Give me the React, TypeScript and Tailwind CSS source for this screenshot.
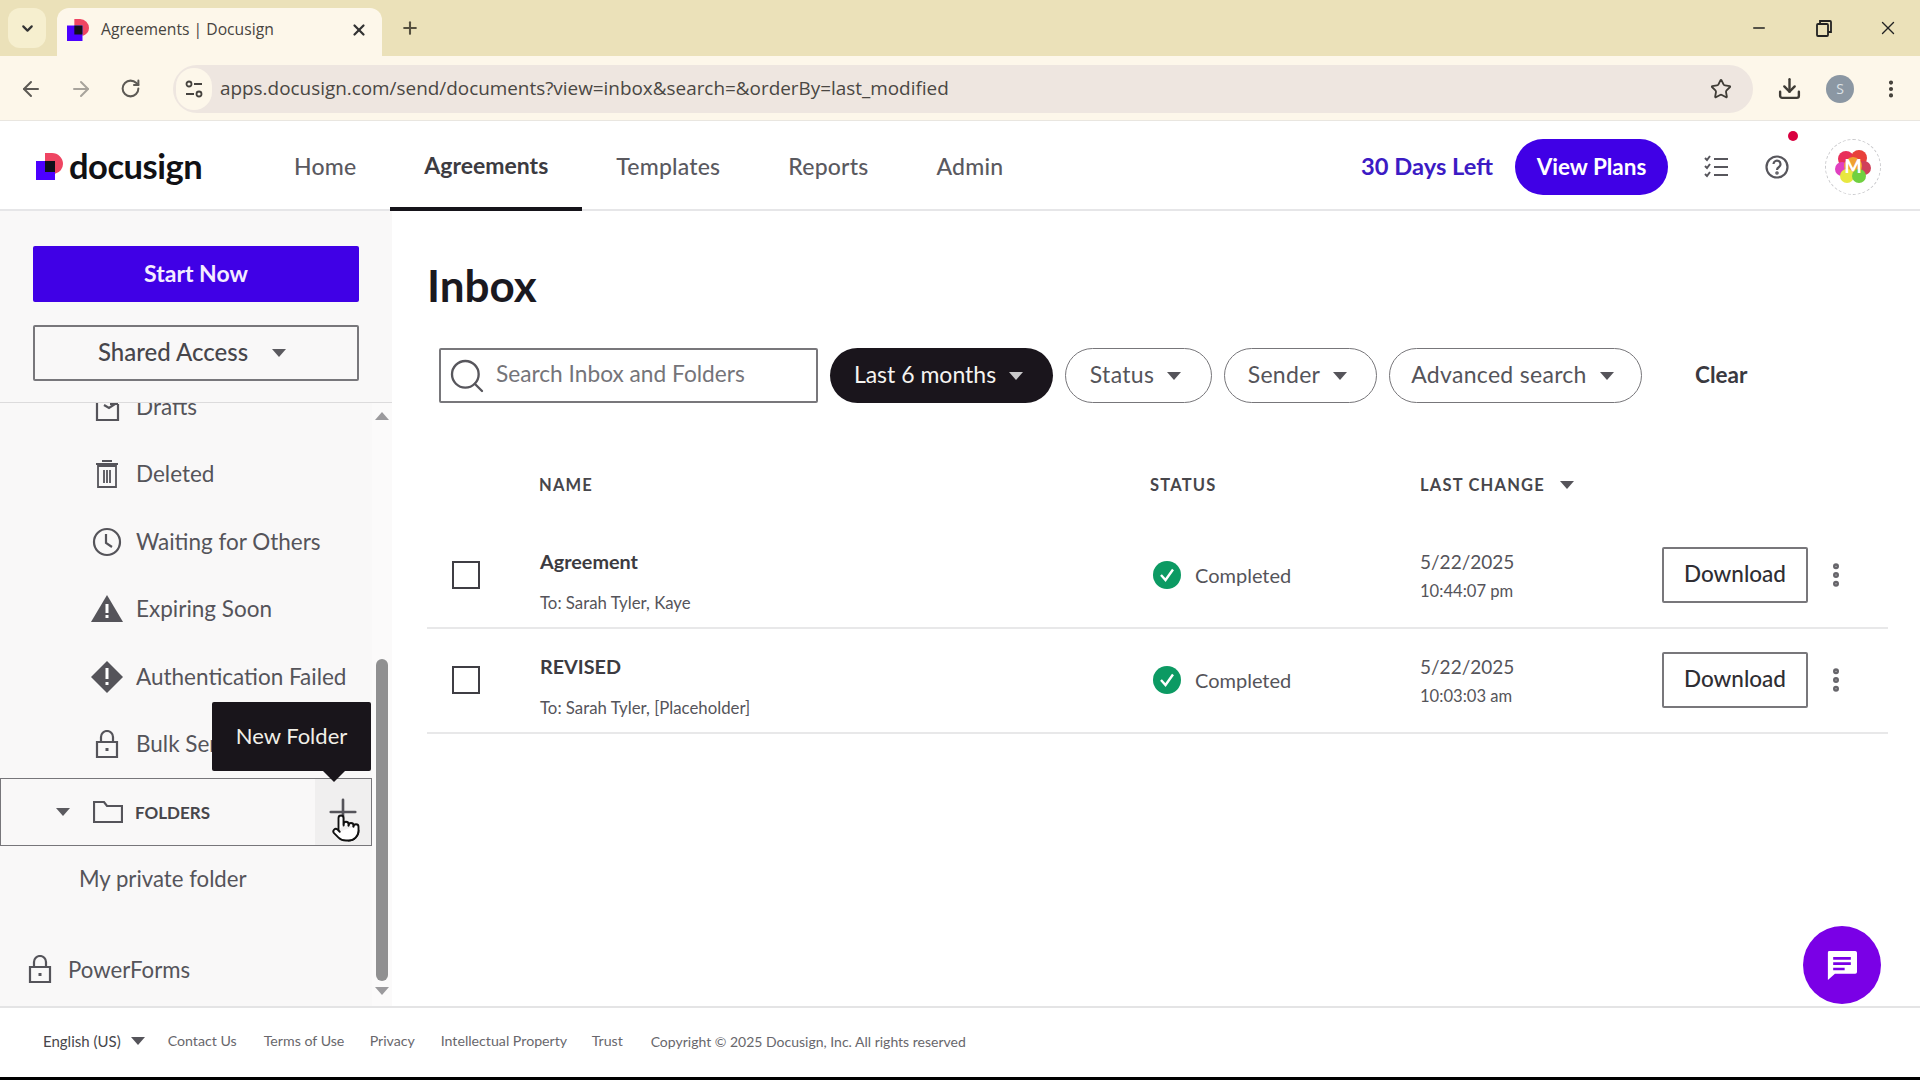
import { ArrowLeft, ArrowRight, ChevronDown, Download as DownloadIcon, EllipsisVertical, Minus, Plus, Pointer, RotateCw, Search, Star, X } from "lucide-react";

const font = "font-['Lato','Noto_Sans',sans-serif]";

function Caret({ className = "" }: { className?: string }) {
    return (
        <svg width="14" height="8" viewBox="0 0 14 8" className={className}>
            <path d="M0 0h14L7 8z" fill="currentColor" />
        </svg>
    );
}

function Logo({ size }: { size: number }) {
    return (
        <svg width={size} height={size} viewBox="0 0 27 27">
            <path d="M9 0h7a11 11 0 0 1 11 11v0a10 10 0 0 1-8 9.800V8H9z" fill="#ef4562" />
            <rect x="0" y="8" width="19" height="19" fill="#4c00ff" />
            <rect x="9" y="8" width="10" height="11" fill="#10101a" />
        </svg>
    );
}

function SideIcon({ name }: { name: string }) {
    const stroke = { fill: "none", stroke: "#55545a", strokeWidth: 2.2 };
    if (name === "drafts") {
        return (
            <svg width="26" height="30" viewBox="0 0 26 30">
                <path d="M3 5v23h21V12" {...stroke} />
                <path d="M10 13l5 3 6-4M16 12l8 0" {...stroke} />
            </svg>
        );
    }
    if (name === "trash") {
        return (
            <svg width="26" height="30" viewBox="0 0 26 30">
                <path d="M4 7h18v21H4zM2 5h22M8 2h10M10 11v13M13 11v13M16 11v13" {...stroke} strokeWidth={1.8} />
            </svg>
        );
    }
    if (name === "clock") {
        return (
            <svg width="30" height="30" viewBox="0 0 30 30">
                <circle cx="15" cy="15" r="13" {...stroke} />
                <path d="M14 7v9l6 4" {...stroke} />
            </svg>
        );
    }
    if (name === "warn") {
        return (
            <svg width="32" height="28" viewBox="0 0 32 28">
                <path d="M16 0l16 27H0z" fill="#55545a" />
                <path d="M14.500 9h3v9h-3zM14.500 20h3v3h-3z" fill="#fff" />
            </svg>
        );
    }
    if (name === "fail") {
        return (
            <svg width="32" height="32" viewBox="0 0 32 32">
                <path d="M16 0l16 16-16 16L0 16z" fill="#55545a" />
                <path d="M14.500 7h3v11h-3zM14.500 21h3v3h-3z" fill="#fff" />
            </svg>
        );
    }
    return (
        <svg width="24" height="28" viewBox="0 0 24 28">
            <path d="M2 12h20v15H2zM6 12V7a6 6 0 0 1 12 0v5" {...stroke} />
            <rect x="10.500" y="18" width="3" height="3" fill="#55545a" />
        </svg>
    );
}

const sideItems = [
    { label: "Drafts", icon: "drafts" },
    { label: "Deleted", icon: "trash" },
    { label: "Waiting for Others", icon: "clock" },
    { label: "Expiring Soon", icon: "warn" },
    { label: "Authentication Failed", icon: "fail" },
    { label: "Bulk Send", icon: "lock" },
];

const rows = [
    { name: "Agreement", to: "To: Sarah Tyler, Kaye", date: "5/22/2025", time: "10:44:07 pm" },
    { name: "REVISED", to: "To: Sarah Tyler, [Placeholder]", date: "5/22/2025", time: "10:03:03 am" },
];

const footerLinks = [
    { label: "Contact Us", w: "w-[96px]" },
    { label: "Terms of Use", w: "w-[106px]" },
    { label: "Privacy", w: "w-[71px]" },
    { label: "Intellectual Property", w: "w-[151px]" },
    { label: "Trust", w: "w-[59px]" },
];

function BrowserChrome() {
    return (
        <>
            <div className="flex h-[56px] items-end bg-[#ebe1b9]">
                <div className="mb-[8px] ml-[8px] flex h-[40px] w-[38px] items-center justify-center rounded-[12px] bg-[#f6efcf]">
                    <ChevronDown size={17} strokeWidth={3} className="text-[#333]" />
                </div>
                <div className="ml-[11px] flex h-[48px] w-[325px] items-center rounded-t-[12px] bg-[#fdf7ea] pb-[4px] pl-[10px] pr-[14px]">
                    <Logo size={22} />
                    <span className="ml-[12px] flex-1 font-['Open_Sans',sans-serif] text-[15.700px] text-[#47443f]">Agreements | Docusign</span>
                    <X size={18} strokeWidth={3} className="text-[#333]" />
                </div>
                <div className="mb-[17px] ml-[18px] flex flex-1 items-center">
                    <Plus size={20} strokeWidth={2.500} className="text-[#55503f]" />
                    <div className="ml-auto flex items-center gap-[47px] pr-[21px]">
                        <Minus size={18} strokeWidth={2} className="text-[#222]" />
                        <svg width="18" height="18" viewBox="0 0 18 18" fill="none" stroke="#222" strokeWidth="1.800">
                            <rect x="2" y="5" width="11" height="12" rx="1" />
                            <path d="M5 5V2h10a1 1 0 0 1 1 1v10h-3" />
                        </svg>
                        <X size={22} strokeWidth={1.500} className="-ml-[3px] text-[#222]" />
                    </div>
                </div>
            </div>
            <div className="flex h-[65px] items-center border-b border-[#e9e6e0] bg-[#fdf7ea] pt-[1px]">
                <div className="flex w-[173px] items-center pl-[19px] text-[#5d5a55]">
                    <ArrowLeft size={24} strokeWidth={2} />
                    <ArrowRight size={24} strokeWidth={2} className="ml-[26px] text-[#a8a49c]" />
                    <RotateCw size={21} strokeWidth={2.300} className="ml-[27px]" />
                </div>
                <div className="flex h-[48px] w-[1580px] items-center rounded-full bg-[#eee6e0]">
                    <div className="ml-[3px] flex h-[42px] w-[36px] items-center justify-center rounded-full bg-[#fdf7ea]">
                        <svg width="20" height="20" viewBox="0 0 20 20" fill="none" stroke="#46433f" strokeWidth="1.800">
                            <circle cx="5" cy="5" r="2.500" />
                            <path d="M10 5h8M2 15h8" />
                            <circle cx="15" cy="15" r="2.500" />
                        </svg>
                    </div>
                    <span className="ml-[8px] flex-1 font-['Open_Sans',sans-serif] text-[18.900px] text-[#4a4743]">apps.docusign.com/send/documents?view=inbox&amp;search=&amp;orderBy=last_modified</span>
                    <Star size={22} strokeWidth={2} className="mr-[21px] text-[#3f3c36]" />
                </div>
                <div className="flex flex-1 items-center pl-[24px]">
                    <DownloadIcon size={25} strokeWidth={2.300} className="text-[#3f3c36]" />
                    <div className="ml-[24px] flex h-[28px] w-[28px] items-center justify-center rounded-full bg-[#8b97a3] font-['Open_Sans',sans-serif] text-[14px] text-[#dde2e6]">S</div>
                    <EllipsisVertical size={22} strokeWidth={2.500} className="ml-[26px] text-[#3f3c36]" />
                </div>
            </div>
        </>
    );
}

function TopNav() {
    const links = ["Home", "Agreements", "Templates", "Reports", "Admin"];
    return (
        <header className="relative flex h-[90px] shrink-0 items-center border-b-2 border-[#e6e6e8] bg-white pt-[3px]">
            <div className="ml-[36px] flex w-[224px] items-center">
                <Logo size={27} />
                <span className="ml-[6px] font-['Lato',sans-serif] text-[34.500px] font-bold leading-none tracking-[-0.500px] text-[#111114]">docusign</span>
            </div>
            <nav className="flex h-full items-stretch">
                {links.map((link) => (
                    <a
                        key={link}
                        className={
                            link === "Agreements"
                                ? "-mb-[2px] flex items-center border-b-[4px] border-b-[#16141a] px-[34px] text-[23px] font-bold text-[#3c3b41]"
                                : "flex items-center px-[34px] text-[23px] font-medium tracking-[0.200px] text-[#5a595f]"
                        }
                    >
                        {link}
                    </a>
                ))}
            </nav>
            <div className="ml-auto flex items-center pr-[39px]">
                <span className="text-[23.700px] font-bold text-[#3c1bc4]">30 Days Left</span>
                <button className="ml-[22px] h-[56px] w-[153px] rounded-full bg-[#4000e6] text-[22.500px] font-bold text-white">View Plans</button>
                <svg width="26" height="26" viewBox="0 0 26 26" fill="none" stroke="#57565c" strokeWidth="2" className="ml-[35px]">
                    <path d="M2 4l2 2 3-4M2 12l2 2 3-4M2 20l2 2 3-4M11 5h14M11 13h14M11 21h14" />
                </svg>
                <svg width="24" height="24" viewBox="0 0 24 24" fill="none" stroke="#57565c" strokeWidth="2.200" className="ml-[36px]">
                    <circle cx="12" cy="12" r="10.500" />
                    <path d="M8.500 9a3.500 3.500 0 1 1 5.500 3c-1.300.9-2 1.500-2 3" />
                    <circle cx="12" cy="18" r="0.700" />
                </svg>
                <div className="ml-[36px] flex h-[56px] w-[56px] items-center justify-center rounded-full border border-dashed border-[#c9c9cc]">
                    <svg width="38" height="38" viewBox="0 0 38 38">
                        <circle cx="12" cy="11" r="8" fill="#e8305a" />
                        <circle cx="25" cy="10" r="8" fill="#e8403a" />
                        <circle cx="8" cy="21" r="7" fill="#e040c0" />
                        <circle cx="30" cy="20" r="7" fill="#d0405a" />
                        <circle cx="19" cy="18" r="9" fill="#f0a030" />
                        <circle cx="13" cy="28" r="7" fill="#e8e840" />
                        <circle cx="25" cy="28" r="7" fill="#70d040" />
                        <text x="19" y="25" textAnchor="middle" fontSize="18" fontWeight="900" fill="#fff" fontFamily="Lato">M</text>
                    </svg>
                </div>
            </div>
            <span className="absolute left-[1788px] top-[10px] h-[10px] w-[10px] rounded-full bg-[#d9003f]" />
        </header>
    );
}

function Sidebar() {
    return (
        <aside className="flex w-[392px] shrink-0 flex-col bg-[#f9f8f8]">
            <div className="flex h-[192px] shrink-0 flex-col gap-[23px] border-b border-[#dcdbdc] pl-[33px] pr-[33px] pt-[35px]">
                <button className="h-[56px] rounded-[2px] bg-[#4000e6] pb-[2px] text-[23px] font-bold text-[#f4ecff]">Start Now</button>
                <button className="flex h-[56px] items-center justify-center rounded-[2px] border-2 border-[#78777b] pb-[2px] pr-[8px] text-[24px] font-medium text-[#47464b]">
                    Shared Access
                    <Caret className="ml-[24px] mt-[2px] text-[#5b5a5f]" />
                </button>
            </div>
            <div className="flex min-h-0 flex-1">
                <div className="relative w-[372px] overflow-hidden text-[22.500px] text-[#55545a]">
                    <div className="-mt-[30px]">
                        {sideItems.map((item) => (
                            <div key={item.label} className="flex h-[67.500px] items-center">
                                <div className="flex w-[136px] justify-center pl-[78px]">
                                    <SideIcon name={item.icon} />
                                </div>
                                <span>{item.label}</span>
                            </div>
                        ))}
                        <div className="relative flex h-[68px] items-center border-[1.500px] border-[#77767a] pl-[55px]">
                            <Caret className="text-[#5b5a5f]" />
                            <svg width="30" height="24" viewBox="0 0 30 24" fill="none" stroke="#55545a" strokeWidth="2.200" className="ml-[23px]">
                                <path d="M1 22V2h10l3 4h15v16z" />
                            </svg>
                            <span className="ml-[12px] pt-[1px] text-[17px] font-bold text-[#47464b]">FOLDERS</span>
                            <div className="ml-auto flex h-full w-[56px] items-center justify-center bg-[#f0efef]">
                                <Plus size={42} strokeWidth={1.500} className="text-[#55545a]" />
                            </div>
                            <Pointer size={30} strokeWidth={1.500} fill="#fff" className="absolute left-[330px] top-[34px] text-[#111]" />
                        </div>
                        <div className="flex h-[66px] items-center pl-[79px] text-[22.200px]">My private folder</div>
                        <div className="mt-[24px] flex h-[66px] items-center pl-[28px] text-[22.200px]">
                            <SideIcon name="lock" />
                            <span className="ml-[16px] pt-[1px]">PowerForms</span>
                        </div>
                    </div>
                    <div className="absolute left-[212px] top-[299px] flex h-[69px] w-[159px] items-center justify-center rounded-[2px] bg-[#19151b] pb-[2px] text-[22px] text-[#f1efe8]">
                        New Folder
                        <span className="absolute -bottom-[11px] left-[111px] h-0 w-0 border-x-[11px] border-t-[11px] border-x-transparent border-t-[#19151b]" />
                    </div>
                </div>
                <div className="flex w-[20px] flex-col items-center bg-[#fbfafa] pb-[11px] pt-[9px] text-[#9b9a9d]">
                    <Caret className="rotate-180" />
                    <div className="flex flex-1 flex-col justify-end pb-[6px]">
                        <div className="h-[322px] w-[12px] rounded-full bg-[#909091]" />
                    </div>
                    <Caret />
                </div>
            </div>
        </aside>
    );
}

function Pill({ label, w, dark }: { label: string; w: string; dark?: boolean }) {
    return (
        <button
            className={
                dark
                    ? `flex h-[55px] ${w} items-center justify-center gap-[13px] rounded-full bg-[#1a151c] pb-[2px] pr-[6px] text-[23px] text-[#f5f3f0]`
                    : `flex h-[55px] ${w} items-center justify-center gap-[13px] rounded-full border border-[#77767a] pb-[2px] pr-[6px] text-[23px] tracking-[0.300px] text-[#55545a]`
            }
        >
            {label}
            <Caret className={dark ? "mt-[2px] text-[#c9c8ca]" : "mt-[2px] text-[#55545a]"} />
        </button>
    );
}

function InboxTable() {
    return (
        <div className="mt-[66px]">
            <div className="grid h-[30px] grid-cols-[112px_611px_270px_242px_1fr] items-center pt-[2px] text-[16.500px] font-bold tracking-[1.200px] text-[#47464b]">
                <div />
                <div>NAME</div>
                <div>STATUS</div>
                <div className="flex items-center gap-[15px]">
                    LAST CHANGE
                    <Caret className="text-[#55545a]" />
                </div>
            </div>
            <div className="mt-[25px]">
                {rows.map((row) => (
                    <div key={row.name} className="grid h-[105px] grid-cols-[112px_611px_270px_242px_1fr] items-center border-b-2 border-[#e8e8e9]">
                        <div className="pb-[2px] pl-[25px]">
                            <div className="h-[28px] w-[28px] border-2 border-[#3f3e44] bg-white" />
                        </div>
                        <div className="pl-[1px] pt-[10px]">
                            <div className="text-[19.800px] font-bold leading-[24px] text-[#3c3b41]">{row.name}</div>
                            <div className="mt-[20px] text-[16.800px] leading-[20px] text-[#55545a]">{row.to}</div>
                        </div>
                        <div className="flex items-center pb-[2px] pl-[3px] text-[20px] text-[#55545a]">
                            <svg width="28" height="28" viewBox="0 0 28 28">
                                <circle cx="14" cy="14" r="14" fill="#0c9a63" />
                                <path d="M8 14l4.500 5L20 8.500" fill="none" stroke="#fff" strokeWidth="2.400" />
                            </svg>
                            <span className="ml-[14px]">Completed</span>
                        </div>
                        <div className="text-[#55545a]">
                            <div className="text-[19px] leading-[26px]">{row.date}</div>
                            <div className="mt-[5px] text-[16.600px] leading-[22px]">{row.time}</div>
                        </div>
                        <div className="flex items-center pb-[2px]">
                            <button className="h-[56px] w-[146px] rounded-[2px] border-2 border-[#78777b] pb-[2px] text-[22.500px] font-medium text-[#2f2e33]">Download</button>
                            <EllipsisVertical size={30} strokeWidth={2.800} className="ml-[13px] text-[#66656a]" />
                        </div>
                    </div>
                ))}
            </div>
        </div>
    );
}

function Footer() {
    return (
        <footer className="flex h-[71px] shrink-0 items-center border-t-2 border-[#e4e4e5] bg-white pb-[3px] pl-[43px] text-[14.200px] text-[#68676c]">
            <span className="text-[15px] text-[#47464b]">English (US)</span>
            <Caret className="ml-[10px] mr-[23px] text-[#55545a]" />
            {footerLinks.map((link) => (
                <span key={link.label} className={link.w}>{link.label}</span>
            ))}
            <span className="text-[14px]">Copyright © 2025 Docusign, Inc. All rights reserved</span>
        </footer>
    );
}

export default function App() {
    return (
        <div className={`flex h-screen w-[1920px] flex-col overflow-hidden bg-black ${font}`}>
            <BrowserChrome />
            <TopNav />
            <div className="flex min-h-0 flex-1">
                <Sidebar />
                <main className="relative flex-1 bg-white pl-[35px] pr-[32px] pt-[50px]">
                    <h1 className="text-[44px] font-bold leading-[48px] text-[#1b191f]">Inbox</h1>
                    <div className="ml-[12px] mt-[39px] flex items-center gap-[12px]">
                        <div className="flex h-[55px] w-[379px] items-center rounded-[2px] border-2 border-[#78777b] pl-[6px]">
                            <Search size={40} strokeWidth={1.400} className="text-[#57565c]" />
                            <span className="ml-[9px] pb-[2px] text-[22.700px] text-[#757479]">Search Inbox and Folders</span>
                        </div>
                        <Pill label="Last 6 months" w="w-[223px]" dark />
                        <Pill label="Status" w="w-[147px]" />
                        <Pill label="Sender" w="w-[153px]" />
                        <Pill label="Advanced search" w="w-[253px]" />
                        <span className="ml-[41px] pb-[2px] text-[22.500px] font-bold text-[#3a393f]">Clear</span>
                    </div>
                    <InboxTable />
                    <button className="absolute bottom-[2px] right-[39px] flex h-[78px] w-[78px] items-center justify-center rounded-full bg-[#7a00e6]">
                        <svg width="32" height="30" viewBox="0 0 36 34">
                            <path d="M3 1h30a2 2 0 0 1 2 2v22a2 2 0 0 1-2 2H10l-8 7V3a2 2 0 0 1 1-2z" fill="#fff" />
                            <path d="M8 8h20v3H8zM8 14h20v3H8zM8 20h13v3H8z" fill="#7a00e6" />
                        </svg>
                    </button>
                </main>
            </div>
            <Footer />
            <div className="h-[3px] shrink-0 bg-black" />
        </div>
    );
}
